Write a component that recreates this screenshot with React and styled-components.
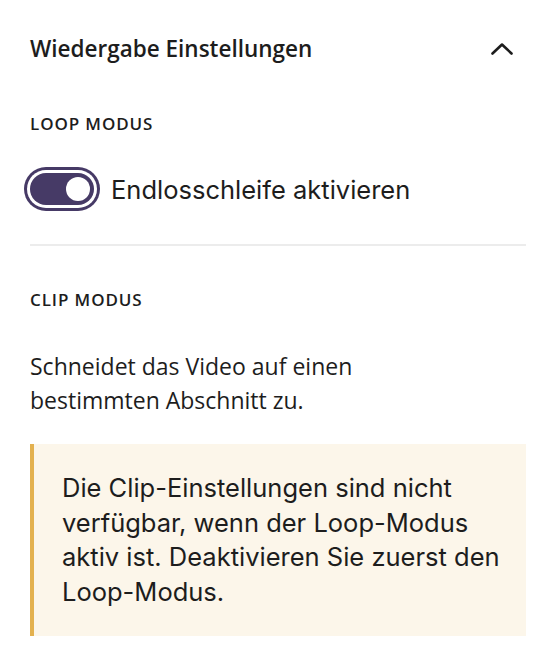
import React, { useState } from 'react';
import styled, { createGlobalStyle } from 'styled-components';

const GlobalStyle = createGlobalStyle`
  html, body {
    margin: 0;
    padding: 0;
    background: #ffffff;
  }
  body {
    font-family: 'Open Sans', 'Noto Sans', sans-serif;
    color: #1f1f1f;
  }
`;

const Panel = styled.div`
  width: 550px;
  box-sizing: border-box;
  padding: 30px 24px 26px 30px;
  display: flex;
  flex-direction: column;
`;

const Header = styled.div`
  display: flex;
  align-items: center;
  justify-content: space-between;
  height: 38px;
`;

const Title = styled.h2`
  margin: 0;
  font-size: 22.5px;
  font-weight: 600;
  line-height: 30px;
  color: #1d1d1d;
`;

const CollapseButton = styled.button`
  border: none;
  background: none;
  padding: 0;
  width: 32px;
  height: 32px;
  display: flex;
  align-items: center;
  justify-content: center;
  cursor: pointer;
  margin-right: 8px;
`;

const SectionLabel = styled.div`
  margin-top: ${(p) => p.$top}px;
  font-size: 17px;
  font-weight: 600;
  line-height: 24px;
  letter-spacing: 0.9px;
  text-transform: uppercase;
  color: #1d1d1d;
`;

const ToggleRow = styled.label`
  margin-top: 31px;
  display: flex;
  align-items: center;
  gap: 17px;
  height: 44px;
  cursor: pointer;
`;

const Track = styled.span`
  position: relative;
  flex: none;
  width: 64px;
  height: 32px;
  border-radius: 16px;
  background: ${(p) => (p.$on ? '#463a66' : '#c9c6d1')};
  box-shadow: 0 0 0 3px #ffffff, 0 0 0 6px #463a66;
`;

const Knob = styled.span`
  position: absolute;
  top: 4px;
  left: ${(p) => (p.$on ? '36px' : '4px')};
  width: 24px;
  height: 24px;
  border-radius: 50%;
  background: #ffffff;
  transition: left 0.15s ease;
`;

const ToggleText = styled.span`
  font-family: 'Inter', 'Noto Sans', sans-serif;
  font-size: 25.5px;
  color: #1d1d1d;
`;

const Divider = styled.hr`
  margin: 33px 0 0;
  border: none;
  height: 2px;
  background: #ececec;
`;

const Description = styled.p`
  margin: 37px 0 0;
  max-width: 400px;
  font-size: 23px;
  line-height: 34px;
  color: #1d1d1d;
`;

const Notice = styled.div`
  margin-top: 27px;
  padding: 27px 20px 27px 28px;
  border-left: 4px solid #e3b14f;
  background: #fcf6ea;
  font-family: 'Inter', 'Noto Sans', sans-serif;
  font-size: 25.5px;
  line-height: 34.5px;
  color: #1d1d1d;
`;

const ChevronUp = () => (
  <svg width="22" height="12" viewBox="0 0 22 12" fill="none">
    <path
      d="M1.5 10.5 L11 1.5 L20.5 10.5"
      stroke="#1d1d1d"
      strokeWidth="2.6"
      strokeLinecap="round"
      strokeLinejoin="round"
    />
  </svg>
);

const App = () => {
  const [loop, setLoop] = useState(true);

  return (
    <>
      <GlobalStyle />
      <Panel>
        <Header>
          <Title>Wiedergabe Einstellungen</Title>
          <CollapseButton aria-label="Einklappen">
            <ChevronUp />
          </CollapseButton>
        </Header>

        <SectionLabel $top={44}>Loop Modus</SectionLabel>
        <ToggleRow onClick={() => setLoop(!loop)}>
          <Track $on={loop}>
            <Knob $on={loop} />
          </Track>
          <ToggleText>Endlosschleife aktivieren</ToggleText>
        </ToggleRow>

        <Divider />

        <SectionLabel $top={42}>Clip Modus</SectionLabel>
        <Description>
          Schneidet das Video auf einen bestimmten Abschnitt zu.
        </Description>

        <Notice>
          Die Clip-Einstellungen sind nicht verfügbar, wenn der Loop-Modus
          aktiv ist. Deaktivieren Sie zuerst den Loop-Modus.
        </Notice>
      </Panel>
    </>
  );
};

export default App;
